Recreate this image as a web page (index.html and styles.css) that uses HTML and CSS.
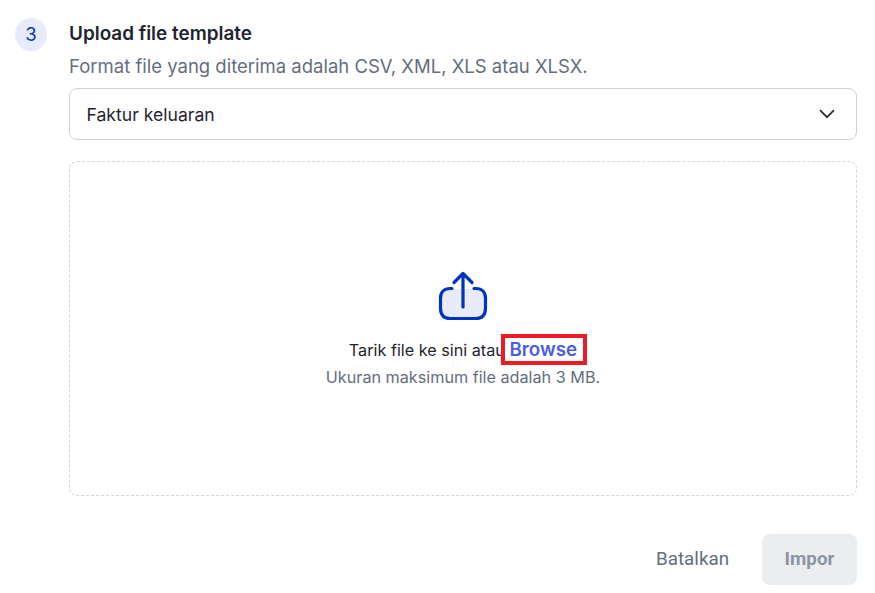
FILE: index.html
```html
<!DOCTYPE html>
<html lang="en">
<head>
    <meta charset="UTF-8">
    <meta name="viewport" content="width=device-width, initial-scale=1.0">
    <title>Upload file template</title>
    <link rel="stylesheet" href="styles.css">
</head>
<body>
    <div class="step">
        <div class="step-number">3</div>
        <div class="step-body">
            <h2 class="step-title">Upload file template</h2>
            <p class="step-desc">Format file yang diterima adalah CSV, XML, XLS atau XLSX.</p>
            <div class="select-box">
                <span>Faktur keluaran</span>
                <svg class="chevron" width="16" height="10" viewBox="0 0 16 10" fill="none">
                    <path d="M1 1.2L8 8.2L15 1.2" stroke="#2b2f38" stroke-width="1.7"/>
                </svg>
            </div>
            <div class="dropzone">
                <svg class="upload-icon" width="50" height="50" viewBox="0 0 50 50" fill="none">
                    <path d="M12 18H38C44 18 47.5 22 47.5 27V37C47.5 44 44 48 38 48H12C6 48 2.5 44 2.5 37V27C2.5 22 6 18 12 18Z" fill="#e8ebfa"/>
                    <path d="M14 17.5H12C6 17.5 2.5 21.5 2.5 27V37C2.5 44 6 47.5 12 47.5H38C44 47.5 47.5 44 47.5 37V27C47.5 21.5 44 17.5 38 17.5H36" stroke="#0033c0" stroke-width="3.2" stroke-linecap="round"/>
                    <path d="M25 36V2.5M16 11.5L25 2.5L34 11.5" stroke="#0033c0" stroke-width="3.2" stroke-linecap="round" stroke-linejoin="round"/>
                </svg>
                <p class="drop-text">Tarik file ke sini atau <a href="#" class="browse">Browse</a></p>
                <p class="drop-hint">Ukuran maksimum file adalah 3 MB.</p>
            </div>
            <div class="actions">
                <button type="button" class="btn-cancel">Batalkan</button>
                <button type="button" class="btn-import" disabled>Impor</button>
            </div>
        </div>
    </div>
</body>
</html>
```

FILE: styles.css
```css
body {
    margin: 0;
    padding: 0;
    background-color: #fff;
    font-family: Inter, "Liberation Sans", sans-serif;
    color: #1f2430;
}
.step {
    display: flex;
    align-items: flex-start;
    gap: 22px;
    padding: 18px 18px 8px 15px;
}
.step-number {
    flex: none;
    width: 32px;
    height: 33px;
    border-radius: 50%;
    background-color: #e8ebfa;
    color: #0a35c0;
    font-size: 18.5px;
    line-height: 32px;
    text-align: center;
}
.step-body {
    flex: 1;
    min-width: 0;
}
.step-title {
    margin: 4px 0 0 0;
    font-size: 18.9px;
    font-weight: 600;
    line-height: 24px;
}
.step-desc {
    margin: 8px 0 0 0;
    font-size: 18.5px;
    line-height: 24px;
    color: #646e7e;
}
.select-box {
    display: flex;
    justify-content: space-between;
    align-items: center;
    box-sizing: border-box;
    height: 52px;
    margin-top: 10px;
    padding: 0 21px 0 16.5px;
    border: 1px solid #cdd3de;
    border-radius: 8px;
    font-size: 17.6px;
}
.dropzone {
    display: flex;
    flex-direction: column;
    align-items: center;
    box-sizing: border-box;
    height: 335px;
    margin-top: 21px;
    padding-top: 109px;
    border: 1px dashed #d2d6dc;
    border-radius: 8px;
}
.upload-icon {
    display: block;
}
.drop-text {
    margin: 17px 0 0 0;
    font-size: 16.2px;
    line-height: 24px;
}
.browse {
    margin: 0 -5.5px 0 -4.5px;
    padding: 0 5.5px 0 4.5px;
    background-color: #fff;
    font-size: 18.8px;
    font-weight: 600;
    color: #4a5fe0;
    text-decoration: none;
    outline: 4px solid #ed1c24;
}
.drop-hint {
    margin: 3px 0 0 0;
    font-size: 16.2px;
    line-height: 24px;
    color: #646e7e;
}
.actions {
    display: flex;
    justify-content: flex-end;
    align-items: center;
    gap: 33px;
    margin-top: 38px;
}
.btn-cancel,
.btn-import {
    font-family: Roboto, "Liberation Sans", sans-serif;
    font-size: 18.8px;
    border: none;
    border-radius: 8px;
    padding: 0 0 2px 0;
    height: 51px;
}
.btn-cancel {
    background: none;
    color: #646e7e;
}
.btn-import {
    width: 95px;
    background-color: #ebeef1;
    color: #8b94a3;
    font-weight: 700;
}
```
